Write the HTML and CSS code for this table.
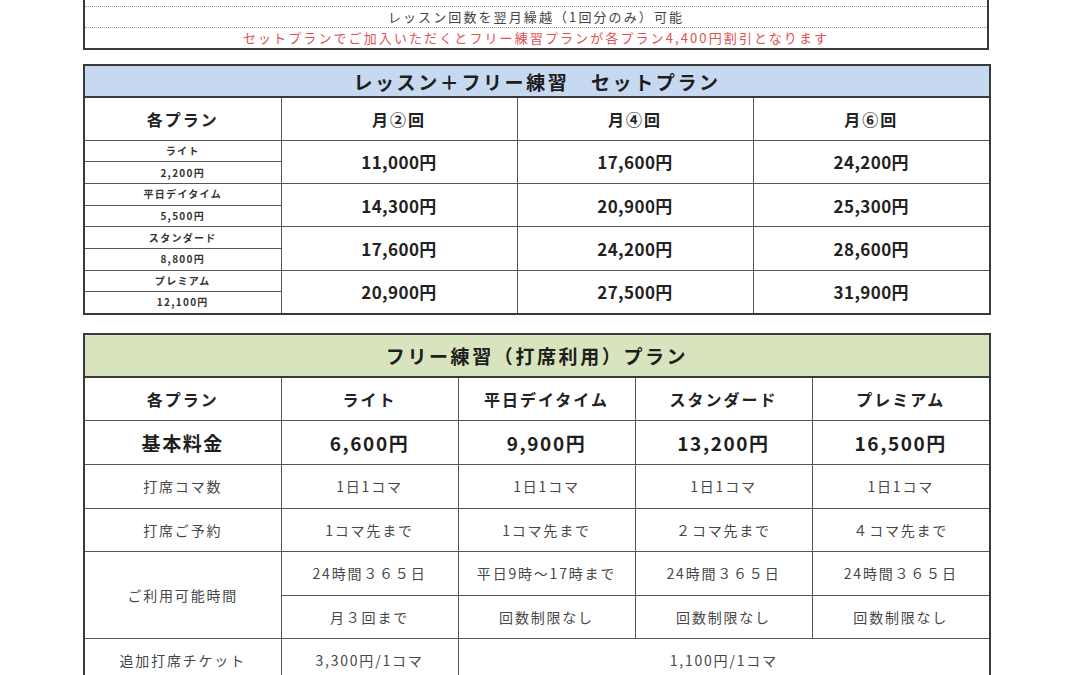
FILE: index.html
```html
<!DOCTYPE html>
<html lang="ja">
<head>
<meta charset="utf-8">
<title>料金プラン</title>
<link rel="stylesheet" href="styles.css">
</head>
<body>
<div class="page">
  <div class="notes">
    <div class="note note-cut"></div>
    <div class="note">レッスン回数を翌月繰越（1回分のみ）可能</div>
    <div class="note note-red">セットプランでご加入いただくとフリー練習プランが各プラン4,400円割引となります</div>
  </div>

  <table class="tbl set">
    <colgroup>
      <col class="c-first"><col class="c-set"><col class="c-set"><col class="c-set-last">
    </colgroup>
    <tr class="title-row blue"><th colspan="4">レッスン＋フリー練習　セットプラン</th></tr>
    <tr class="head-row">
      <th>各プラン</th><th>月②回</th><th>月④回</th><th>月⑥回</th>
    </tr>
    <tr class="sub-a"><td class="plan-name">ライト</td><td class="price" rowspan="2">11,000円</td><td class="price" rowspan="2">17,600円</td><td class="price" rowspan="2">24,200円</td></tr>
    <tr class="sub-b"><td class="plan-price">2,200円</td></tr>
    <tr class="sub-a"><td class="plan-name">平日デイタイム</td><td class="price" rowspan="2">14,300円</td><td class="price" rowspan="2">20,900円</td><td class="price" rowspan="2">25,300円</td></tr>
    <tr class="sub-b"><td class="plan-price">5,500円</td></tr>
    <tr class="sub-a"><td class="plan-name">スタンダード</td><td class="price" rowspan="2">17,600円</td><td class="price" rowspan="2">24,200円</td><td class="price" rowspan="2">28,600円</td></tr>
    <tr class="sub-b"><td class="plan-price">8,800円</td></tr>
    <tr class="sub-a"><td class="plan-name">プレミアム</td><td class="price" rowspan="2">20,900円</td><td class="price" rowspan="2">27,500円</td><td class="price" rowspan="2">31,900円</td></tr>
    <tr class="sub-b"><td class="plan-price">12,100円</td></tr>
  </table>

  <table class="tbl free">
    <colgroup>
      <col class="c-first"><col class="c-free"><col class="c-free"><col class="c-free"><col class="c-free-last">
    </colgroup>
    <tr class="title-row green"><th colspan="5">フリー練習（打席利用）プラン</th></tr>
    <tr class="head-row">
      <th>各プラン</th><th>ライト</th><th>平日デイタイム</th><th>スタンダード</th><th>プレミアム</th>
    </tr>
    <tr class="fee-row">
      <th>基本料金</th><td>6,600円</td><td>9,900円</td><td>13,200円</td><td>16,500円</td>
    </tr>
    <tr class="reg-row">
      <td>打席コマ数</td><td>1日1コマ</td><td>1日1コマ</td><td>1日1コマ</td><td>1日1コマ</td>
    </tr>
    <tr class="reg-row">
      <td>打席ご予約</td><td>1コマ先まで</td><td>1コマ先まで</td><td>２コマ先まで</td><td>４コマ先まで</td>
    </tr>
    <tr class="reg-row">
      <td rowspan="2">ご利用可能時間</td><td>24時間３６５日</td><td>平日9時～17時まで</td><td>24時間３６５日</td><td>24時間３６５日</td>
    </tr>
    <tr class="reg-row">
      <td>月３回まで</td><td>回数制限なし</td><td>回数制限なし</td><td>回数制限なし</td>
    </tr>
    <tr class="reg-row">
      <td>追加打席チケット</td><td>3,300円/1コマ</td><td colspan="3">1,100円/1コマ</td>
    </tr>
  </table>
</div>
</body>
</html>
```

FILE: styles.css
```css
html, body {
  margin: 0;
  padding: 0;
  background: #ffffff;
}

body {
  font-family: "Noto Sans CJK JP", "Noto Sans", sans-serif;
  color: #222222;
}

.page {
  width: 906px;
  margin-left: 83px;
  display: flex;
  flex-direction: column;
}

/* ---------- notes box ---------- */
.notes {
  border-left: 2px solid #3a3a3a;
  border-right: 2px solid #3a3a3a;
  border-bottom: 2px solid #3a3a3a;
  display: flex;
  flex-direction: column;
}

.note {
  height: 20px;
  line-height: 19px;
  text-align: center;
  font-size: 13px;
  letter-spacing: 2.1px;
  color: #444444;
  border-top: 1px dotted #9a9a9a;
}

.note-cut {
  height: 6px;
  border-top: none;
}

.note-red {
  color: #e0514f;
}

/* ---------- tables ---------- */
.tbl {
  width: 906px;
  table-layout: fixed;
  border-collapse: collapse;
  border: 2px solid #3a3a3a;
}

.set { margin-top: 14px; }
.free { margin-top: 18px; }

.c-first { width: 197px; }
.c-set { width: 236px; }
.c-set-last { width: 237px; }
.c-free { width: 177px; }
.c-free-last { width: 178px; }

.tbl th,
.tbl td {
  border: 1px solid #585858;
  padding: 0;
  text-align: center;
  vertical-align: middle;
  white-space: nowrap;
  overflow: hidden;
}

.title-row th {
  border-bottom: 2px solid #3a3a3a;
  font-size: 19px;
  font-weight: 700;
  letter-spacing: 2.6px;
  color: #1e1e1e;
}

.blue th { background: #c6d9f1; }
.green th { background: #d7e4bd; }

.set .title-row { height: 32px; }
.free .title-row { height: 43px; }

.head-row { height: 43px; }
.free .head-row { height: 44px; }
.head-row th {
  font-size: 16px;
  font-weight: 700;
  letter-spacing: 2px;
  color: #222222;
}

.sub-a, .sub-b { height: 21.7px; }

.plan-name,
.plan-price {
  font-size: 10px;
  font-weight: 700;
  letter-spacing: 1.3px;
  color: #333333;
  line-height: 12px;
}

.price {
  font-size: 17px;
  font-weight: 700;
  letter-spacing: 0.4px;
  color: #222222;
}

.fee-row { height: 44px; }
.fee-row th,
.fee-row td {
  font-size: 19px;
  font-weight: 700;
  letter-spacing: 1.6px;
  color: #1e1e1e;
}

.reg-row { height: 43.6px; }
.reg-row td {
  font-size: 14px;
  font-weight: 400;
  letter-spacing: 1.8px;
  color: #474747;
}
```
